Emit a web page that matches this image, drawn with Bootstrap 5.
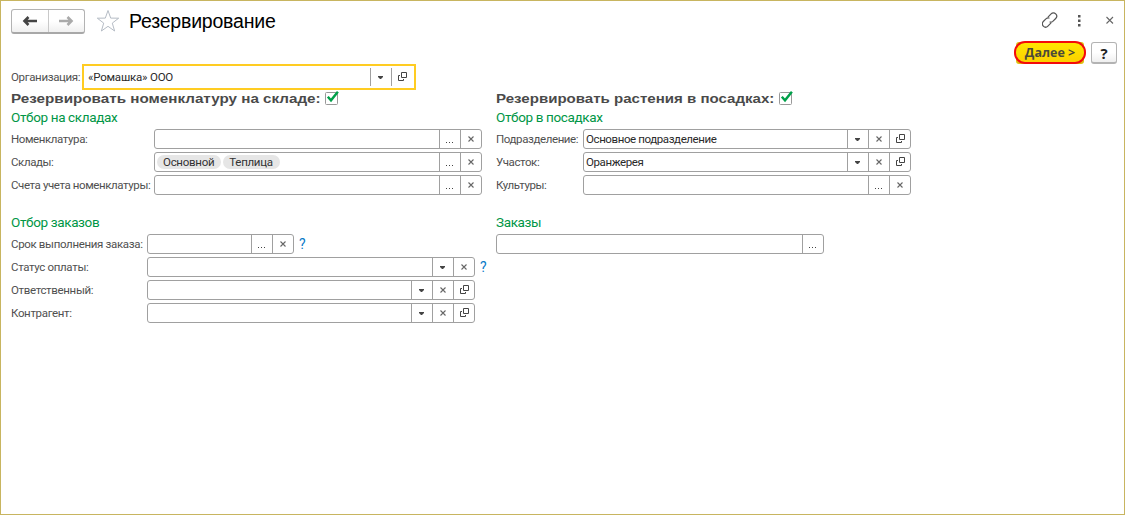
<!DOCTYPE html>
<html lang="ru">
<head>
<meta charset="utf-8">
<title>Резервирование</title>
<link href="https://cdn.jsdelivr.net/npm/bootstrap@5.3.0/dist/css/bootstrap.min.css" rel="stylesheet">
<style>
  body { font: 11.5px/20px Roboto, "Liberation Sans", sans-serif; color: #505050; background: #fff; }
  .window { height: 515px; border: 1px solid #c8b560; padding: 7px 10px 0; }
  .titlebar { height: 26px; }
  .history { width: 74px; height: 25px; border: 1px solid #b3b3b3; border-bottom: 2px solid #a8a8a8; border-radius: 3px; background: linear-gradient(#fff 50%, #f0f0f0); }
  .history span + span { border-left: 1px solid #c9c9c9; }
  .star { margin: 0 9px 0 11px; }
  .page-title { font: 19.5px/26px "Liberation Sans", sans-serif; color: #000; letter-spacing: -.2px; }
  .window-tools { margin-right: -2px; }
  .commands { height: 22px; margin: 8px -3px 0 0; }
  .next-base { height: 22px; margin: 0 7px 0 0; border-radius: 3px; background: #dcc010; }
  .next { width: 72px; height: 23px; margin: -1px -2px 0; border: 2px solid #f30b0b; border-radius: 11px; background: linear-gradient(#ffe600, #fbd000); font: bold 12.5px/19px "Open Sans", sans-serif; color: #4a4a3a; }
  .help { width: 26px; height: 22px; border: 1px solid #b3b3b3; border-bottom-width: 2px; border-radius: 3px; background: linear-gradient(#fff 50%, #efefef); font: bold 15px/20px "Open Sans", sans-serif; color: #222; }
  .org-label { width: 71px; padding-top: 3px; }
  .org { width: 334px; height: 26px; border: 2px solid #fc2; padding: 2px 2px 2px 1px; }
  .org .value { padding-left: 3px; letter-spacing: -.2px; }
  .org .tool { height: 18px; }
  .heading { height: 17px; font: bold 13px/17px "Liberation Sans", sans-serif; color: #4a4a4a; }
  .heading-a { width: 314px; } .heading-b { width: 283px; }
  .stretch { display: inline-block; white-space: nowrap; transform: scaleX(1.17); transform-origin: 0 50%; }
  .heading-b .stretch { transform: scaleX(1.158); }
  .group-title { height: 22px; font-size: 13.5px; line-height: 21px; color: #009646; letter-spacing: -.36px; }
  .left-side { width: 485px; }
  .fields { gap: 3px; }
  .caption-a { width: 143px; } .caption-b { width: 136px; } .caption-c { width: 87px; }
  .caption-a, .caption-b, .caption-c, .org-label { flex: none; white-space: nowrap; letter-spacing: -.4px; }
  .caption-b, .org-label { letter-spacing: -.34px; }
  .field { width: 328px; height: 20px; border: 1px solid #a0a0a0; border-radius: 3px; }
  .field.short { width: 147px; }
  .value { color: #2a2a2a; line-height: 18px; padding-left: 2px; letter-spacing: -.4px; }
  .tool { width: 21px; flex: none; border-left: 1px solid #a0a0a0; }
  .token { height: 14px; line-height: 14px; border-radius: 7px; background: #e6e6e6; padding: 0 7px 0 6px; color: #333; margin-left: 2px; letter-spacing: -.28px; }
  .hint { font-size: 14px; line-height: 20px; color: #0a7ac8; margin-left: 5px; }
  .orders { margin-top: 17px; }
  svg { display: block; flex: none; }
</style>
</head>
<body>
<svg width="0" height="0" class="position-absolute">
  <symbol id="dots" viewBox="0 0 20 18"><path d="M6 12h1v1H6zM9 12h1v1H9zM12 12h1v1h-1z" fill="#444"/></symbol>
  <symbol id="clear" viewBox="0 0 20 18"><path d="M7.500 6.500l5 5M12.500 6.500l-5 5" stroke="#666" stroke-width="1.100"/></symbol>
  <symbol id="drop" viewBox="0 0 20 18"><path d="M7 8h5v1l-2 2H9L7 9z" fill="#444"/></symbol>
  <symbol id="open" viewBox="0 0 20 18"><path d="M9.500 4.500h5v5h-5zM8 7.500H6.500v5h5V11" fill="none" stroke="#444"/></symbol>
  <symbol id="check" viewBox="0 0 15 15"><rect x=".5" y="2.500" width="12" height="12" rx="1" fill="#fff" stroke="#999"/><path d="M2.800 6.800L6 10.300 12.900 1.800" fill="none" stroke="#00a04a" stroke-width="2.400"/></symbol>
</svg>
<main class="window">
  <header class="titlebar d-flex align-items-center">
    <div class="history d-flex">
      <span class="flex-fill d-flex align-items-center justify-content-center"><svg width="16" height="10" viewBox="0 0 16 10"><path d="M2 5h13M6.500 1L2.500 5l4 4" fill="none" stroke="#444" stroke-width="2.600"/></svg></span>
      <span class="flex-fill d-flex align-items-center justify-content-center"><svg width="16" height="10" viewBox="0 0 16 10"><path d="M1 5h13M9.500 1l4 4-4 4" fill="none" stroke="#aaa" stroke-width="2.600"/></svg></span>
    </div>
    <svg class="star" width="24" height="24" viewBox="0 0 24 24"><path d="M12 1.500l2.700 7.600 8 .1-6.400 4.900 2.300 7.900-6.600-4.700L5.400 22l2.300-7.900-6.400-4.900 8-.1z" fill="#fff" stroke="#b5bcc5"/></svg>
    <h1 class="page-title m-0">Резервирование</h1>
    <div class="window-tools ms-auto d-flex align-items-center">
      <svg width="18" height="18" viewBox="0 0 18 18"><g transform="translate(-1 -.5)" fill="none" stroke="#555" stroke-width="1.200" stroke-linecap="round"><path d="M7.200 5.300l2.900-2.900a3.200 3.200 0 0 1 4.600 4.600l-2.900 2.900q-1.300 1.100-2.800.6"/><path d="M9.800 11.700l-2.900 2.900a3.200 3.200 0 0 1-4.600-4.600l2.900-2.900q1.300-1.100 2.800-.6"/></g></svg>
      <svg width="42" height="18" viewBox="0 0 42 18"><path d="M18 3h2.500v2.500H18zM18 7.500h2.500V10H18zM18 12h2.500v2.500H18z" fill="#555"/></svg>
      <svg width="14" height="18" viewBox="0 0 14 18"><path d="M4.500 5l6.500 6.500M11 5l-6.500 6.500" stroke="#666" stroke-width="1.100"/></svg>
    </div>
  </header>
  <div class="commands d-flex justify-content-end">
    <div class="next-base d-flex"><button class="next p-0">Далее &gt;</button></div>
    <button class="help p-0">?</button>
  </div>
  <div class="d-flex">
    <div class="org-label">Организация:</div>
    <div class="org d-flex"><div class="value flex-fill">«Ромашка» ООО</div>
      <span class="tool"><svg width="20" height="18"><use href="#drop"/></svg></span><span class="tool"><svg width="20" height="18"><use href="#open"/></svg></span></div>
  </div>
  <div class="d-flex">
    <section class="left-side">
      <div class="heading d-flex"><span class="heading-a"><span class="stretch">Резервировать номенклатуру на складе:</span></span><svg width="15" height="15"><use href="#check"/></svg></div>
      <div class="group-title">Отбор на складах</div>
      <div class="fields d-flex flex-column">
        <div class="d-flex"><span class="caption-a">Номенклатура:</span><div class="field d-flex justify-content-end"><span class="tool"><svg width="20" height="18"><use href="#dots"/></svg></span><span class="tool"><svg width="20" height="18"><use href="#clear"/></svg></span></div></div>
        <div class="d-flex"><span class="caption-a">Склады:</span><div class="field d-flex"><div class="flex-fill d-flex align-items-center"><span class="token">Основной</span><span class="token">Теплица</span></div><span class="tool"><svg width="20" height="18"><use href="#dots"/></svg></span><span class="tool"><svg width="20" height="18"><use href="#clear"/></svg></span></div></div>
        <div class="d-flex"><span class="caption-a">Счета учета номенклатуры:</span><div class="field d-flex justify-content-end"><span class="tool"><svg width="20" height="18"><use href="#dots"/></svg></span><span class="tool"><svg width="20" height="18"><use href="#clear"/></svg></span></div></div>
      </div>
      <div class="orders">
        <div class="group-title">Отбор заказов</div>
        <div class="fields d-flex flex-column">
          <div class="d-flex"><span class="caption-b">Срок выполнения заказа:</span><div class="field short d-flex justify-content-end"><span class="tool"><svg width="20" height="18"><use href="#dots"/></svg></span><span class="tool"><svg width="20" height="18"><use href="#clear"/></svg></span></div><span class="hint">?</span></div>
          <div class="d-flex"><span class="caption-b">Статус оплаты:</span><div class="field d-flex justify-content-end"><span class="tool"><svg width="20" height="18"><use href="#drop"/></svg></span><span class="tool"><svg width="20" height="18"><use href="#clear"/></svg></span></div><span class="hint">?</span></div>
          <div class="d-flex"><span class="caption-b">Ответственный:</span><div class="field d-flex justify-content-end"><span class="tool"><svg width="20" height="18"><use href="#drop"/></svg></span><span class="tool"><svg width="20" height="18"><use href="#clear"/></svg></span><span class="tool"><svg width="20" height="18"><use href="#open"/></svg></span></div></div>
          <div class="d-flex"><span class="caption-b">Контрагент:</span><div class="field d-flex justify-content-end"><span class="tool"><svg width="20" height="18"><use href="#drop"/></svg></span><span class="tool"><svg width="20" height="18"><use href="#clear"/></svg></span><span class="tool"><svg width="20" height="18"><use href="#open"/></svg></span></div></div>
        </div>
      </div>
    </section>
    <section>
      <div class="heading d-flex"><span class="heading-b"><span class="stretch">Резервировать растения в посадках:</span></span><svg width="15" height="15"><use href="#check"/></svg></div>
      <div class="group-title">Отбор в посадках</div>
      <div class="fields d-flex flex-column">
        <div class="d-flex"><span class="caption-c">Подразделение:</span><div class="field d-flex"><div class="value flex-fill">Основное подразделение</div><span class="tool"><svg width="20" height="18"><use href="#drop"/></svg></span><span class="tool"><svg width="20" height="18"><use href="#clear"/></svg></span><span class="tool"><svg width="20" height="18"><use href="#open"/></svg></span></div></div>
        <div class="d-flex"><span class="caption-c">Участок:</span><div class="field d-flex"><div class="value flex-fill">Оранжерея</div><span class="tool"><svg width="20" height="18"><use href="#drop"/></svg></span><span class="tool"><svg width="20" height="18"><use href="#clear"/></svg></span><span class="tool"><svg width="20" height="18"><use href="#open"/></svg></span></div></div>
        <div class="d-flex"><span class="caption-c">Культуры:</span><div class="field d-flex justify-content-end"><span class="tool"><svg width="20" height="18"><use href="#dots"/></svg></span><span class="tool"><svg width="20" height="18"><use href="#clear"/></svg></span></div></div>
      </div>
      <div class="orders">
        <div class="group-title">Заказы</div>
        <div class="field d-flex justify-content-end"><span class="tool"><svg width="20" height="18"><use href="#dots"/></svg></span></div>
      </div>
    </section>
  </div>
</main>
<script src="https://cdn.jsdelivr.net/npm/bootstrap@5.3.0/dist/js/bootstrap.bundle.min.js"></script>
</body>
</html>
